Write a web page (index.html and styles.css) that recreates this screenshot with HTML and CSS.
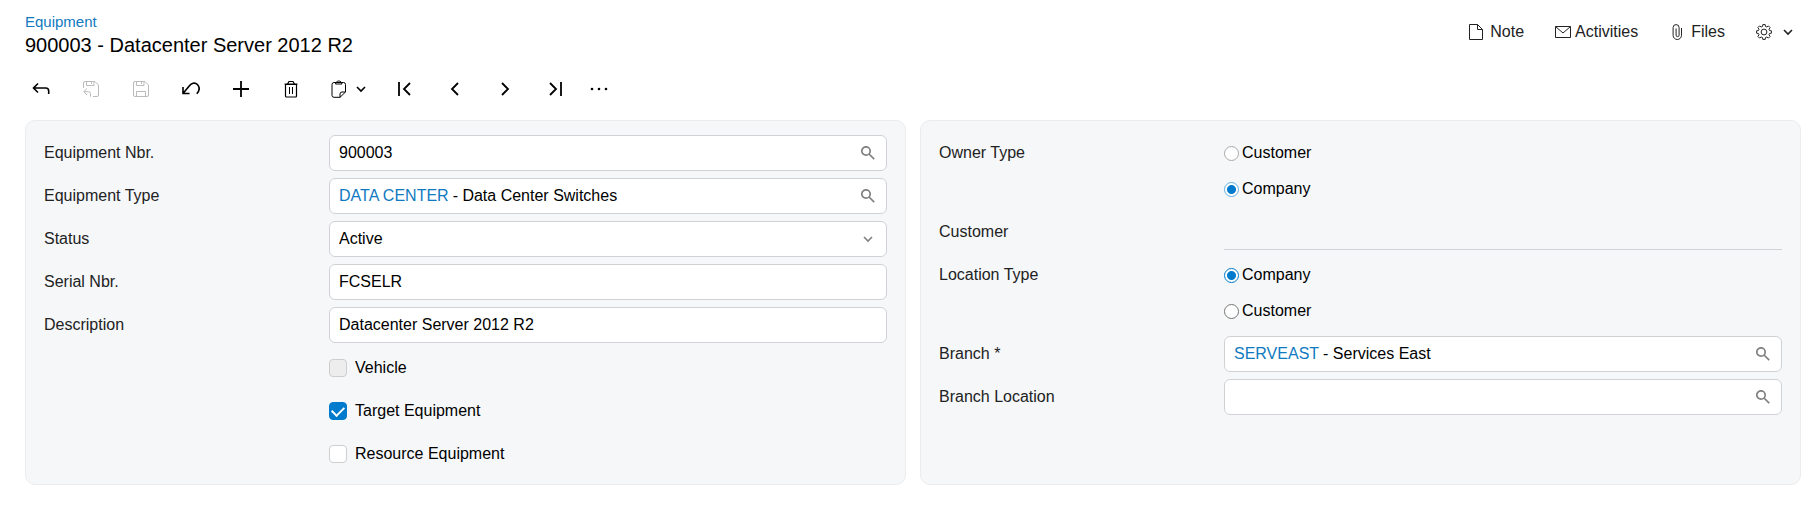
FILE: index.html
```html
<!DOCTYPE html>
<html lang="en">
<head>
    <meta charset="UTF-8">
    <meta name="viewport" content="width=device-width, initial-scale=1.0">
    <title>Equipment</title>
    <link rel="stylesheet" href="styles.css">
</head>
<body>
    <header class="page-header">
        <div class="titles">
            <a class="screen-link" href="#">Equipment</a>
            <h1 class="title">900003 - Datacenter Server 2012 R2</h1>
        </div>
        <div class="header-actions">
            <button class="header-button" type="button">
                <svg class="icon" viewBox="0 0 16 16"><path d="M1.5 .5h8l5 5v10h-13zM9.500 .5v5h5"/></svg>
                Note
            </button>
            <button class="header-button tight" type="button">
                <svg class="icon" viewBox="0 0 16 16"><path d="M.5 2.500h15v11H.5zM.8 2.800L8 9l7.200-6.200"/></svg>
                Activities
            </button>
            <button class="header-button" type="button">
                <svg class="icon" viewBox="0 0 16 16"><path d="M12.500 4v7.300a4.200 4.200 0 0 1-8.400 0V3.600a3 3 0 0 1 6 0v7.600a1.500 1.500 0 0 1-3 0V4.500"/></svg>
                Files
            </button>
            <button class="header-button settings" type="button" aria-label="Settings">
                <svg class="icon" viewBox="0 0 16 16"><path d="M6.800.6h2.400l.3 1.900 1.300.5 1.600-1.100 1.700 1.700L13 5.200l.5 1.300 1.900.3v2.400l-1.900.3-.5 1.300 1.100 1.600-1.700 1.700-1.600-1.100-1.300.5-.3 1.900H6.800l-.3-1.900-1.300-.5-1.600 1.100-1.700-1.700L3 10.800l-.5-1.300-1.900-.3V6.800l1.900-.3L3 5.200 1.900 3.600l1.700-1.700L5.200 3l1.300-.5z"/><circle cx="8" cy="8" r="2.900"/></svg>
                <svg class="chevron" viewBox="0 0 10 10"><path d="M1 3l4 4 4-4"/></svg>
            </button>
        </div>
    </header>

    <nav class="toolbar" aria-label="Actions">
        <button class="tool" type="button" aria-label="Back">
            <svg class="icon bold" viewBox="0 0 18 18"><path d="M6 3.500L1.500 8 6 12.500M1.500 8h12.200a3 3 0 0 1 3 3v3"/></svg>
        </button>
        <button class="tool" type="button" aria-label="Save and close" disabled>
            <svg class="icon" viewBox="0 0 18 18"><path d="M1.500 8V3a1.500 1.500 0 0 1 1.500-1.500h10l3.500 3.500v10a1.500 1.500 0 0 1-1.500 1.500h-4M4.500 1.500v4h7.500v-4M9.500 1.500v2.500M5 8.500L1.800 11.700 5 15M1.800 11.700h4.700a2 2 0 0 1 2 2v3"/></svg>
        </button>
        <button class="tool" type="button" aria-label="Save" disabled>
            <svg class="icon" viewBox="0 0 18 18"><path d="M3 1.500h10l3.500 3.500v10a1.500 1.500 0 0 1-1.500 1.500H3A1.500 1.500 0 0 1 1.500 15V3A1.500 1.500 0 0 1 3 1.500zM4.500 1.500v4h7.500v-4M9.500 1.500v2.500M4.500 16.500v-5h9v5"/></svg>
        </button>
        <button class="tool" type="button" aria-label="Undo">
            <svg class="icon bold" viewBox="0 0 18 18"><path d="M1 7v6.500h6.500M1.200 13.300L7 6.300C9 3.200 12.800 2 15.400 4.500c2.500 2.700 2 6.300-.6 9.200"/></svg>
        </button>
        <button class="tool" type="button" aria-label="Add">
            <svg class="icon heavy" viewBox="0 0 18 18"><path d="M9 1v16M1 9h16"/></svg>
        </button>
        <button class="tool" type="button" aria-label="Delete">
            <svg class="icon" viewBox="0 0 18 18"><path class="thick" d="M3.500 4.500h11v11.500a1 1 0 0 1-1 1h-9a1 1 0 0 1-1-1zM2.500 4h13M5.500 4l1.500-2.500h4L12.500 4"/><path d="M7.500 7v7M10.500 7v7"/></svg>
        </button>
        <button class="tool menu" type="button" aria-label="Clipboard">
            <svg class="icon" viewBox="0 0 18 18"><path d="M10 17.300H4a2 2 0 0 1-2-2V4.500a2 2 0 0 1 2-2h9.500a2 2 0 0 1 2 2V12zM10 17.300V14a2 2 0 0 1 2-2h3.500M5.500 4C6 0 11.500 0 12 4z"/></svg>
            <svg class="chevron" viewBox="0 0 10 10"><path d="M1 3l4 4 4-4"/></svg>
        </button>
        <button class="tool" type="button" aria-label="First">
            <svg class="icon heavy" viewBox="0 0 18 18"><path d="M3 2v14M14 3L8 9l6 6"/></svg>
        </button>
        <button class="tool" type="button" aria-label="Previous">
            <svg class="icon heavy" viewBox="0 0 18 18"><path d="M12 3L6 9l6 6"/></svg>
        </button>
        <button class="tool" type="button" aria-label="Next">
            <svg class="icon heavy" viewBox="0 0 18 18"><path d="M6 3l6 6-6 6"/></svg>
        </button>
        <button class="tool" type="button" aria-label="Last">
            <svg class="icon heavy" viewBox="0 0 18 18"><path d="M4 3l6 6-6 6M15 2v14"/></svg>
        </button>
        <button class="tool more" type="button" aria-label="More">
            <svg class="icon dots" viewBox="0 0 18 18"><circle cx="2" cy="9" r="1.300"/><circle cx="9" cy="9" r="1.300"/><circle cx="16" cy="9" r="1.300"/></svg>
        </button>
    </nav>

    <main class="panels">
        <section class="panel">
            <div class="row">
                <label class="label" for="equipmentNbr">Equipment Nbr.</label>
                <div class="field">
                    <input class="input" id="equipmentNbr" type="text" value="900003">
                    <svg class="search" viewBox="0 0 14 14"><circle cx="5" cy="5" r="4.200"/><path d="M8 8l5.200 5.200"/></svg>
                </div>
            </div>
            <div class="row">
                <label class="label" for="equipmentType">Equipment Type</label>
                <div class="field">
                    <a class="link" href="#">DATA CENTER</a>
                    <input class="input" id="equipmentType" type="text" value="- Data Center Switches">
                    <svg class="search" viewBox="0 0 14 14"><circle cx="5" cy="5" r="4.200"/><path d="M8 8l5.200 5.200"/></svg>
                </div>
            </div>
            <div class="row">
                <label class="label" for="status">Status</label>
                <div class="field">
                    <select class="input" id="status">
                        <option>Active</option>
                    </select>
                    <svg class="chevron select-arrow" viewBox="0 0 10 10"><path d="M1 3l4 4 4-4"/></svg>
                </div>
            </div>
            <div class="row">
                <label class="label" for="serialNbr">Serial Nbr.</label>
                <div class="field">
                    <input class="input" id="serialNbr" type="text" value="FCSELR">
                </div>
            </div>
            <div class="row">
                <label class="label" for="description">Description</label>
                <div class="field">
                    <input class="input" id="description" type="text" value="Datacenter Server 2012 R2">
                </div>
            </div>
            <div class="row">
                <label class="option check"><input type="checkbox" disabled>Vehicle</label>
            </div>
            <div class="row">
                <label class="option check"><input type="checkbox" checked>Target Equipment</label>
            </div>
            <div class="row">
                <label class="option check"><input type="checkbox">Resource Equipment</label>
            </div>
        </section>

        <section class="panel">
            <div class="row" role="radiogroup" aria-labelledby="ownerType">
                <span class="label" id="ownerType">Owner Type</span>
                <div class="options light">
                    <label class="option"><input type="radio" name="ownerType">Customer</label>
                    <label class="option"><input type="radio" name="ownerType" checked>Company</label>
                </div>
            </div>
            <div class="row">
                <label class="label" for="customer">Customer</label>
                <div class="field readonly">
                    <input class="input" id="customer" type="text" readonly>
                </div>
            </div>
            <div class="row" role="radiogroup" aria-labelledby="locationType">
                <span class="label" id="locationType">Location Type</span>
                <div class="options">
                    <label class="option"><input type="radio" name="locationType" checked>Company</label>
                    <label class="option"><input type="radio" name="locationType">Customer</label>
                </div>
            </div>
            <div class="row">
                <label class="label" for="branch">Branch *</label>
                <div class="field">
                    <a class="link" href="#">SERVEAST</a>
                    <input class="input" id="branch" type="text" value="- Services East">
                    <svg class="search" viewBox="0 0 14 14"><circle cx="5" cy="5" r="4.200"/><path d="M8 8l5.200 5.200"/></svg>
                </div>
            </div>
            <div class="row">
                <label class="label" for="branchLocation">Branch Location</label>
                <div class="field">
                    <input class="input" id="branchLocation" type="text">
                    <svg class="search" viewBox="0 0 14 14"><circle cx="5" cy="5" r="4.200"/><path d="M8 8l5.200 5.200"/></svg>
                </div>
            </div>
        </section>
    </main>
</body>
</html>
```
FILE: styles.css
```css
* {
    box-sizing: border-box;
}

body {
    margin: 0;
    background-color: #fff;
    color: #000;
    font-family: "Liberation Sans", Arial, sans-serif;
    font-size: 16px;
    line-height: 20px;
}

button,
input,
select {
    font: inherit;
    color: inherit;
}

a {
    color: #0f7abf;
    text-decoration: none;
}

/* header */
.page-header {
    display: flex;
    justify-content: space-between;
    align-items: flex-start;
    padding: 12px 18px 0 25px;
}

.screen-link {
    display: block;
    font-size: 15px;
}

.title {
    margin: 0;
    font-size: 20px;
    font-weight: normal;
    line-height: 26px;
}

.header-actions {
    display: flex;
    gap: 31px;
    padding-top: 10px;
}

.header-button {
    display: flex;
    align-items: center;
    gap: 6px;
    padding: 0;
    border: none;
    background: none;
    color: #222;
    cursor: pointer;
}

.header-button.tight {
    gap: 4px;
}

.header-button.settings {
    gap: 11px;
}

/* icons */
svg {
    flex: none;
    fill: none;
    stroke: currentColor;
}

.icon {
    width: 18px;
    height: 18px;
}

.header-button .icon {
    width: 16px;
    height: 16px;
}

.icon.bold {
    stroke-width: 1.6;
}

.icon.heavy {
    stroke-width: 1.8;
}

.icon.dots {
    fill: currentColor;
    stroke: none;
}

.thick {
    stroke-width: 1.2;
}

.chevron {
    width: 10px;
    height: 10px;
    stroke-width: 1.6;
}

.search {
    width: 14px;
    height: 14px;
    color: #808080;
    stroke-width: 1.7;
}

/* toolbar */
.toolbar {
    display: flex;
    padding: 13px 16px;
}

.tool {
    display: flex;
    justify-content: center;
    align-items: center;
    width: 50px;
    height: 36px;
    padding: 0;
    border: none;
    background: none;
    cursor: pointer;
}

.tool:disabled {
    color: #bbb;
    cursor: default;
}

.tool.menu {
    gap: 8px;
    width: 64px;
}

.tool.more {
    width: 38px;
}

/* form */
.panels {
    display: grid;
    grid-template-columns: 1fr 1fr;
    gap: 14px;
    padding: 0 10px 0 25px;
}

.panel {
    display: flex;
    flex-direction: column;
    gap: 7px;
    padding: 14px 18px 12px;
    border: 1px solid #ebecee;
    border-radius: 10px;
    background-color: #f5f7f9;
}

.row {
    display: grid;
    grid-template-columns: 285px 1fr;
}

.label {
    color: #222;
    line-height: 36px;
}

.field {
    display: flex;
    align-items: center;
    gap: 4px;
    height: 36px;
    padding: 0 11px 0 9px;
    border: 1px solid #d0d2d5;
    border-radius: 6px;
    background-color: #fff;
}

.field.readonly {
    border-width: 0 0 1px;
    border-radius: 0;
    background: none;
}

.input {
    flex: 1;
    min-width: 0;
    padding: 0;
    border: none;
    outline: none;
    background: none;
    appearance: none;
}

.select-arrow {
    margin-right: 2px;
    color: #808080;
}

.option {
    display: flex;
    align-items: center;
    gap: 3px;
    height: 36px;
}

.option input {
    flex: none;
    width: 15px;
    height: 15px;
    margin: 0;
    border: 1px solid #767676;
    border-radius: 50%;
    background-color: #fff;
    appearance: none;
}

.option input:checked {
    border-color: #007acc;
    background: radial-gradient(#007acc 4px, #fff 5px);
}

.light .option input {
    border-color: #aaa;
}

.light .option input:checked {
    border-color: #66afe0;
}

.option.check {
    grid-column: 2;
    gap: 8px;
}

.check input {
    display: flex;
    justify-content: center;
    align-items: center;
    width: 18px;
    height: 18px;
    border-color: #ccced0;
    border-radius: 4px;
}

.check input:disabled {
    background-color: #ededed;
}

.check input:checked {
    background: #007acc;
}

.check input:checked::after {
    content: "";
    width: 6px;
    height: 10px;
    margin-bottom: 3px;
    border: solid #fff;
    border-width: 0 2px 2px 0;
    transform: rotate(45deg);
}
```
